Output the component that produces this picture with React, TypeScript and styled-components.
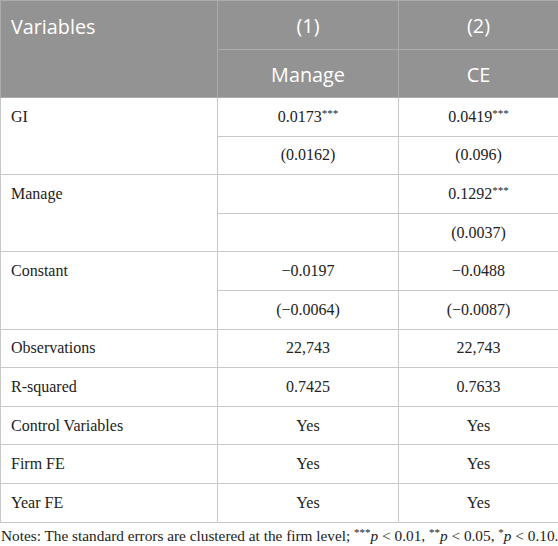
import React from "react";
import styled, { createGlobalStyle } from "styled-components";

const Global = createGlobalStyle`
  html, body { margin: 0; padding: 0; background: #ffffff; }
  body { font-family: "Liberation Serif", serif; }
`;

const Wrap = styled.div`
  width: 558px;
  display: flex;
  flex-direction: column;
`;

const Table = styled.table`
  width: 558px;
  border-collapse: collapse;
  table-layout: fixed;
  border-left: 1px solid #bdbdbd;
  border-top: 1px solid #bdbdbd;
`;

const HeadCell = styled.th<{ $left?: boolean }>`
  background: #939393;
  color: #ffffff;
  font-family: "Open Sans", "Noto Sans", sans-serif;
  font-weight: 400;
  font-size: 19.8px;
  text-align: ${(p) => (p.$left ? "left" : "center")};
  vertical-align: ${(p) => (p.$left ? "top" : "middle")};
  padding: ${(p) => (p.$left ? "12px 10px 0" : "2px 8px 0")};
  height: 48.5px;
  box-sizing: border-box;
  border: 1px solid #ababab;
`;

const Cell = styled.td<{ $center?: boolean; $top?: boolean }>`
  font-family: "Liberation Serif", serif;
  font-size: 16px;
  color: #222222;
  text-align: ${(p) => (p.$center ? "center" : "left")};
  vertical-align: ${(p) => (p.$top ? "top" : "middle")};
  padding: ${(p) => (p.$top ? "10px 10px 0" : "0 10px")};
  height: 38.6px;
  box-sizing: border-box;
  border: 1px solid #c8c8c8;
`;

const Stars = styled.sup`
  font-size: 11px;
  vertical-align: 5px;
  line-height: 0;
`;

const Notes = styled.p`
  margin: 0;
  padding: 4px 0 0 1px;
  font-family: "Liberation Serif", serif;
  font-size: 15.3px;
  color: #222222;
  white-space: nowrap;
`;

const It = styled.i``;

type Row = { label: string; a: React.ReactNode; b: React.ReactNode; a2?: React.ReactNode; b2?: React.ReactNode; double?: boolean };

const star = (v: string) => (
  <>
    {v}
    <Stars>***</Stars>
  </>
);

const rows: Row[] = [
  { label: "GI", a: star("0.0173"), b: star("0.0419"), a2: "(0.0162)", b2: "(0.096)", double: true },
  { label: "Manage", a: "", b: star("0.1292"), a2: "", b2: "(0.0037)", double: true },
  { label: "Constant", a: "\u22120.0197", b: "\u22120.0488", a2: "(\u22120.0064)", b2: "(\u22120.0087)", double: true },
  { label: "Observations", a: "22,743", b: "22,743" },
  { label: "R-squared", a: "0.7425", b: "0.7633" },
  { label: "Control Variables", a: "Yes", b: "Yes" },
  { label: "Firm FE", a: "Yes", b: "Yes" },
  { label: "Year FE", a: "Yes", b: "Yes" },
];

export default function App() {
  return (
    <Wrap>
      <Global />
      <Table>
        <colgroup>
          <col style={{ width: 217 }} />
          <col style={{ width: 181 }} />
          <col style={{ width: 160 }} />
        </colgroup>
        <thead>
          <tr>
            <HeadCell $left rowSpan={2}>Variables</HeadCell>
            <HeadCell>(1)</HeadCell>
            <HeadCell>(2)</HeadCell>
          </tr>
          <tr>
            <HeadCell>Manage</HeadCell>
            <HeadCell>CE</HeadCell>
          </tr>
        </thead>
        <tbody>
          {rows.map((r) =>
            r.double ? (
              <React.Fragment key={r.label}>
                <tr>
                  <Cell $top rowSpan={2}>{r.label}</Cell>
                  <Cell $center>{r.a}</Cell>
                  <Cell $center>{r.b}</Cell>
                </tr>
                <tr>
                  <Cell $center>{r.a2}</Cell>
                  <Cell $center>{r.b2}</Cell>
                </tr>
              </React.Fragment>
            ) : (
              <tr key={r.label}>
                <Cell>{r.label}</Cell>
                <Cell $center>{r.a}</Cell>
                <Cell $center>{r.b}</Cell>
              </tr>
            )
          )}
        </tbody>
      </Table>
      <Notes>
        Notes: The standard errors are clustered at the firm level; <Stars>***</Stars>
        <It>p</It> &lt; 0.01, <Stars>**</Stars>
        <It>p</It> &lt; 0.05, <Stars>*</Stars>
        <It>p</It> &lt; 0.10.
      </Notes>
    </Wrap>
  );
}
